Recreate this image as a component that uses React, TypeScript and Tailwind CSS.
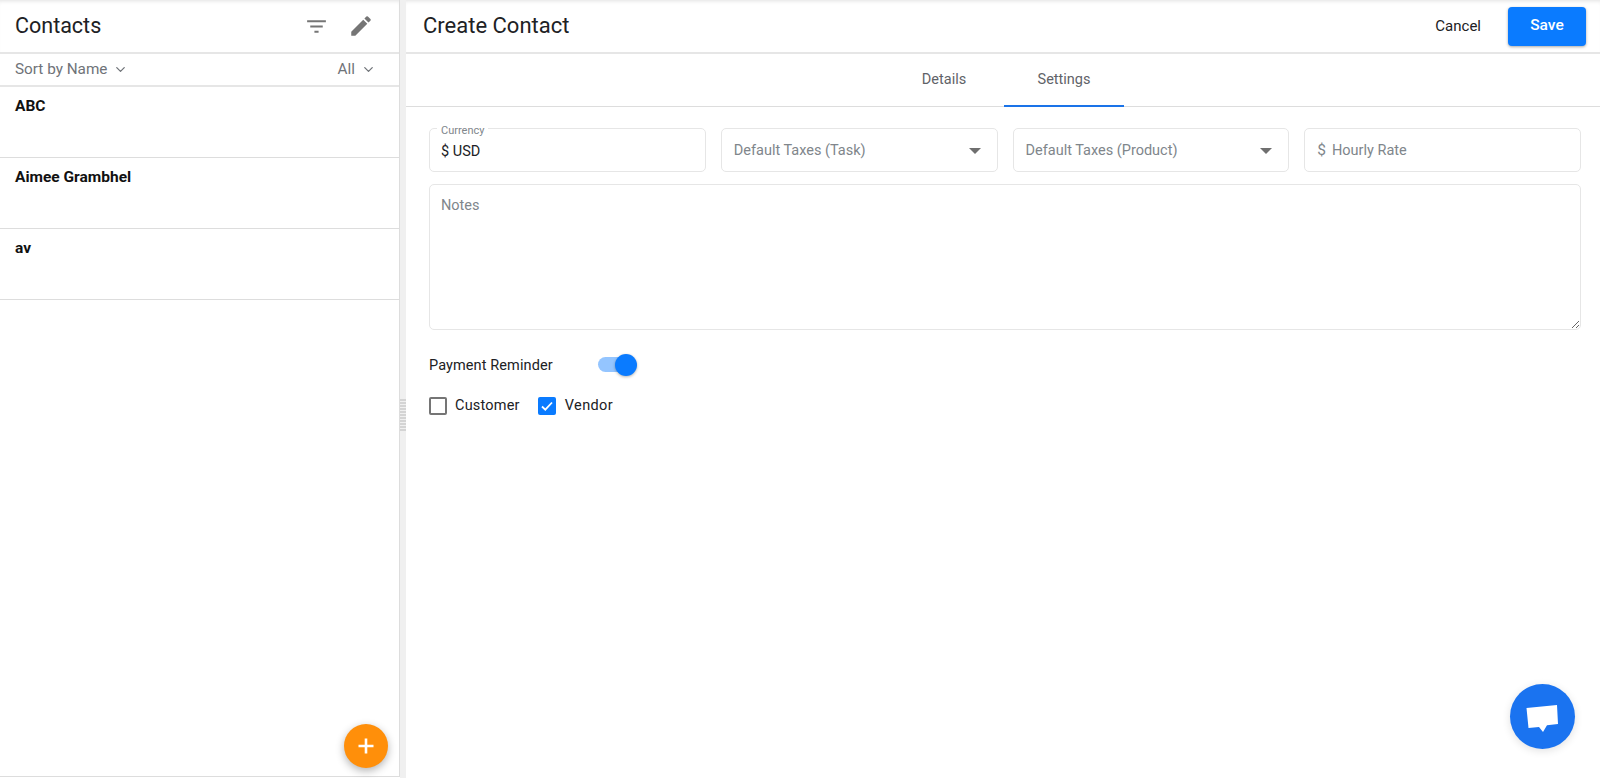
import { ChevronDown } from "lucide-react"
import { MdEdit, MdFilterList } from "react-icons/md"

const contacts = ["ABC", "Aimee Grambhel", "av"]

function SelectBox({ label }: { label: string }) {
  return (
    <div className="h-[44px] flex items-center justify-between pl-[12px] pr-[16px] pt-[2px] border border-[#e6e6e6] rounded-[5px] text-[14.5px] text-[#80868b]">
      <span>{label}</span>
      <span className="w-0 h-0 border-x-[6px] border-x-transparent border-t-[6px] border-t-[#6f6f6f]" />
    </div>
  )
}

export default function App() {
  return (
    <div className="relative h-[778px] w-[1600px] overflow-hidden bg-white flex font-['Roboto',sans-serif] text-[#202124]">
      {/* Sidebar */}
      <div className="w-[400px] h-[777px] flex flex-col border-r border-b border-[#dddddd]">
        <div className="h-[54px] shrink-0 flex items-center justify-between pl-[15px] pr-[25px] border-b-2 border-[#e6e6e6] shadow-[inset_0_4px_4px_-3px_rgba(0,0,0,0.12)]">
          <h1 className="text-[21.5px] leading-none">Contacts</h1>
          <div className="flex items-center gap-[19px] text-[#757575]">
            <MdFilterList size={25} />
            <MdEdit size={26} />
          </div>
        </div>
        <div className="h-[33px] shrink-0 flex items-center justify-between pl-[15px] pr-[23px] border-b-2 border-[#e6e6e6] text-[15.3px] text-[#6f7378]">
          <span className="flex items-center gap-[6px]">Sort by Name <ChevronDown size={15} /></span>
          <span className="flex items-center gap-[6px]">All <ChevronDown size={15} /></span>
        </div>
        {contacts.map((name) => (
          <div key={name} className="h-[71px] shrink-0 pl-[15px] pt-[9px] border-b border-[#dddddd] text-[15.5px] font-bold text-[#111] leading-[20px]">
            {name}
          </div>
        ))}
      </div>

      {/* Resize strip */}
      <div className="w-[6px] bg-[#f0f0f0] flex items-center justify-center pt-[50px]">
        <div className="w-[6px] h-[33px] bg-[repeating-linear-gradient(0deg,#d4d4d4_0,#d4d4d4_2px,#f0f0f0_2px,#f0f0f0_3px)]" />
      </div>

      {/* Form */}
      <div className="flex-1 flex flex-col">
        <div className="h-[54px] shrink-0 flex items-center justify-between pl-[17px] pr-[14px] border-b-2 border-[#e6e6e6] shadow-[inset_0_4px_4px_-3px_rgba(0,0,0,0.12)]">
          <h2 className="text-[22px] leading-none">Create Contact</h2>
          <div className="flex items-center gap-[27px]">
            <button className="text-[15px]">Cancel</button>
            <button className="w-[78px] h-[39px] rounded-[4px] bg-[#0a7bff] text-white text-[15.5px] font-medium shadow-[0_1px_3px_rgba(0,0,0,0.35)]">Save</button>
          </div>
        </div>

        <div className="h-[53px] shrink-0 flex justify-center pl-[2px] border-b border-[#dddddd] text-[14.5px] text-[#5f6368]">
          <div className="w-[120px] flex items-center justify-center">Details</div>
          <div className="w-[120px] flex items-center justify-center border-b-2 border-[#1a73e8] -mb-px">Settings</div>
        </div>

        <div className="flex flex-col pl-[23px] pr-[19px] pt-[21px]">
          <div className="grid grid-cols-4 gap-[15px]">
            <div className="relative h-[44px] flex items-end pl-[11px] pb-[9px] border border-[#e6e6e6] rounded-[5px] text-[14.5px] leading-[20px]">
              <span className="absolute -top-[5px] left-[7px] px-[4px] bg-white text-[11px] leading-[13px] text-[#80868b]">Currency</span>
              $ USD
            </div>
            <SelectBox label="Default Taxes (Task)" />
            <SelectBox label="Default Taxes (Product)" />
            <div className="h-[44px] flex items-center pl-[12px] pt-[2px] gap-[6px] border border-[#e6e6e6] rounded-[5px] text-[14.5px] text-[#80868b]">
              <span className="text-[15.5px]">$</span>
              <input placeholder="Hourly Rate" className="flex-1 min-w-0 outline-none placeholder:text-[#80868b]" />
            </div>
          </div>

          <textarea
            placeholder="Notes"
            className="mt-[12px] h-[146px] px-[11px] py-[11px] border border-[#e6e6e6] rounded-[5px] text-[14.5px] leading-[20px] outline-none placeholder:text-[#80868b]"
          />

          <div className="mt-[24px] flex items-center h-[24px]">
            <span className="w-[169px] text-[14.5px] tracking-[0.1px]">Payment Reminder</span>
            <span className="relative w-[38px] h-[15px] mb-[3px] rounded-full bg-[#94c5ff]">
              <span className="absolute -right-[1px] -top-[3px] w-[22px] h-[22px] rounded-full bg-[#0a7bff] shadow-[0_1px_3px_rgba(0,0,0,0.3)]" />
            </span>
          </div>

          <div className="mt-[18px] flex items-center h-[20px] text-[14.5px] tracking-[0.2px]">
            <span className="w-[18px] h-[18px] rounded-[2px] border-2 border-[#757575]" />
            <span className="ml-[8px] mr-[18px]">Customer</span>
            <span className="w-[18px] h-[18px] rounded-[2px] bg-[#0a7bff] flex items-center justify-center">
              <svg width="14" height="14" viewBox="0 0 14 14" fill="none" stroke="white" strokeWidth="1.8">
                <path d="M2 7.500l3.300 3.200L12 3.500" />
              </svg>
            </span>
            <span className="ml-[9px] tracking-[0.4px]">Vendor</span>
          </div>
        </div>
      </div>

      {/* Add contact */}
      <button className="absolute left-[344px] top-[724px] w-[44px] h-[44px] rounded-full bg-[#ff8f0a] flex items-center justify-center shadow-[0_3px_8px_rgba(0,0,0,0.3)]">
        <svg width="18" height="18" viewBox="0 0 18 18" stroke="white" strokeWidth="2.6">
          <path d="M9 1.500v15M1.500 9h15" />
        </svg>
      </button>

      {/* Chat */}
      <button className="absolute left-[1510px] top-[684px] w-[65px] h-[65px] rounded-full bg-[#1a73f0] flex items-center justify-center shadow-[0_2px_8px_rgba(0,0,0,0.12)]">
        <svg width="34" height="30" viewBox="0 0 34 30" fill="white">
          <path d="M0.500 6L31 3l1 19-11 1.200L17 30l-4-5-10.500 1z" />
        </svg>
      </button>
    </div>
  )
}
